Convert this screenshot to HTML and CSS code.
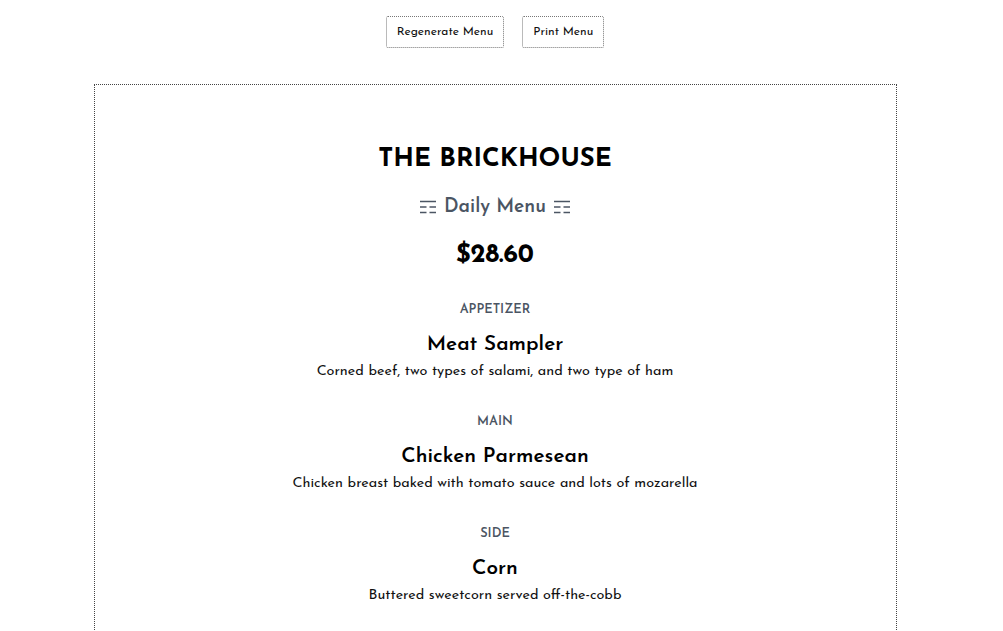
FILE: index.html
```html
<!DOCTYPE html>
<html>
<head>
<meta charset="utf-8">
<link rel="stylesheet" href="styles.css">
</head>
<body>
<div class="page">
  <div class="actions">
    <button class="btn">Regenerate Menu</button>
    <button class="btn">Print Menu</button>
  </div>
  <div class="menu">
    <h1 class="title">THE BRICKHOUSE</h1>
    <h2 class="subtitle">
      <svg class="tri" width="16" height="14" viewBox="0 0 16 14"><g stroke="#4b5563" stroke-width="1.5"><line x1="0" y1="1.5" x2="16" y2="1.5"/><line x1="0" y1="7" x2="6.5" y2="7"/><line x1="9.5" y1="7" x2="16" y2="7"/><line x1="0" y1="12.5" x2="6.5" y2="12.5"/><line x1="9.5" y1="12.5" x2="16" y2="12.5"/></g></svg>
      <span>Daily Menu</span>
      <svg class="tri" width="16" height="14" viewBox="0 0 16 14"><g stroke="#4b5563" stroke-width="1.5"><line x1="0" y1="1.5" x2="16" y2="1.5"/><line x1="0" y1="7" x2="6.5" y2="7"/><line x1="9.5" y1="7" x2="16" y2="7"/><line x1="0" y1="12.5" x2="6.5" y2="12.5"/><line x1="9.5" y1="12.5" x2="16" y2="12.5"/></g></svg>
    </h2>
    <div class="price">$28.60</div>
    <section class="course">
      <div class="course-label">APPETIZER</div>
      <div class="dish">Meat Sampler</div>
      <div class="desc">Corned beef, two types of salami, and two type of ham</div>
    </section>
    <section class="course">
      <div class="course-label">MAIN</div>
      <div class="dish">Chicken Parmesean</div>
      <div class="desc">Chicken breast baked with tomato sauce and lots of mozarella</div>
    </section>
    <section class="course">
      <div class="course-label">SIDE</div>
      <div class="dish">Corn</div>
      <div class="desc">Buttered sweetcorn served off-the-cobb</div>
    </section>
  </div>
</div>
</body>
</html>
```

FILE: styles.css
```css
html, body {
  margin: 0;
  padding: 0;
  background: #ffffff;
}
body {
  font-family: "Josefin Sans", Lato, "Noto Sans", sans-serif;
  color: #111111;
}
.page {
  width: 990px;
  display: flex;
  flex-direction: column;
  align-items: center;
}
.actions {
  display: flex;
  gap: 18px;
  margin-top: 16px;
}
.btn {
  font-family: inherit;
  font-size: 12px;
  color: #111;
  background: #fff;
  border: 1px dotted #777;
  border-radius: 2px;
  height: 32px;
  padding: 0 10px;
  cursor: pointer;
}
.menu {
  margin-top: 36px;
  width: 801px;
  min-height: 600px;
  border: 1px dotted #444;
  display: flex;
  flex-direction: column;
  align-items: center;
  padding-top: 58px;
}
.title {
  margin: 0;
  font-size: 25.6px;
  font-weight: 700;
  line-height: 34px;
  color: #000;
}
.subtitle {
  margin: 17px 0 0;
  font-size: 19.2px;
  font-weight: 600;
  line-height: 28px;
  color: #4b5563;
  display: flex;
  align-items: center;
  gap: 8px;
}
.tri {
  display: block;
  margin-top: -2px;
}
.price {
  margin-top: 18px;
  font-size: 25.6px;
  font-weight: 700;
  line-height: 32px;
  color: #000;
}
.course {
  margin-top: 29px;
  display: flex;
  flex-direction: column;
  align-items: center;
}
.course + .course {
  margin-top: 31px;
}
.course-label {
  font-size: 12.8px;
  font-weight: 600;
  color: #4b5563;
  line-height: 18px;
}
.dish {
  margin-top: 12px;
  font-size: 20.8px;
  font-weight: 600;
  line-height: 28px;
  color: #000;
}
.desc {
  margin-top: 3px;
  font-size: 14.4px;
  line-height: 20px;
  color: #111;
}
```
